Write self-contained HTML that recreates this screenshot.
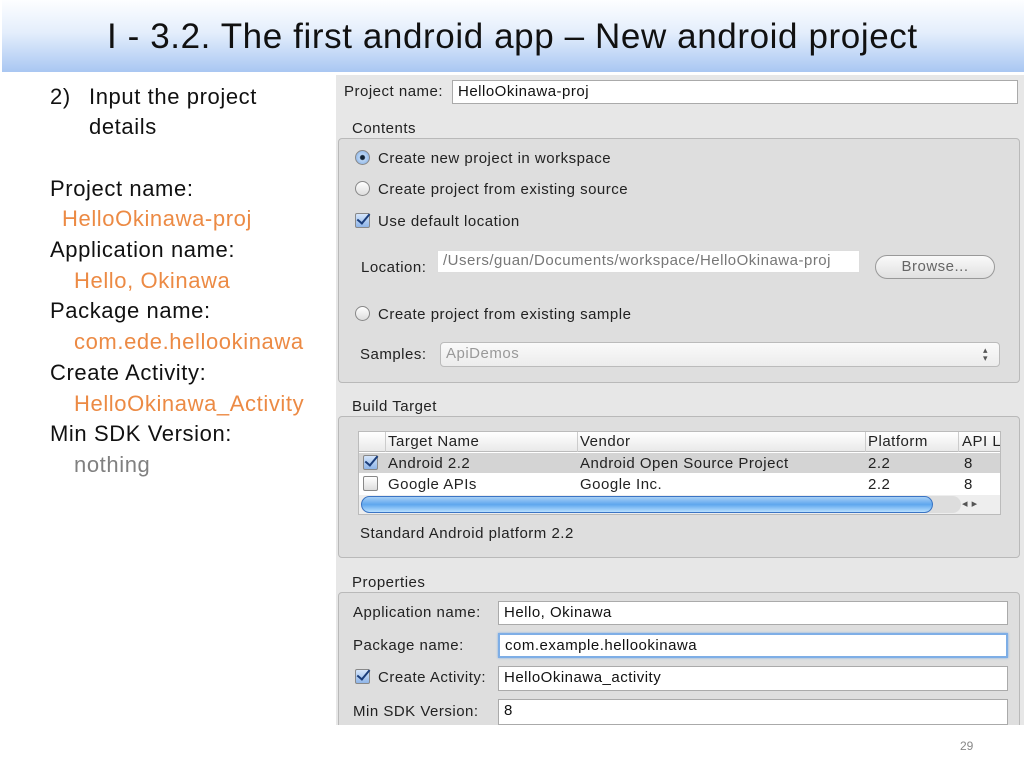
<!DOCTYPE html>
<html><head><meta charset="utf-8"><style>
*{margin:0;padding:0;box-sizing:border-box}
body{width:1024px;height:768px;background:#fff;position:relative;overflow:hidden;font-family:"Liberation Sans",sans-serif}
.a{position:absolute;white-space:nowrap}
#title{left:2px;top:0;width:1022px;height:72px;background:linear-gradient(#fdfeff 0%,#e4eefc 45%,#a9c7f2 100%)}
#title div{position:absolute;left:105px;top:17px;font-size:35px;color:#111;letter-spacing:0.6px}
.lt{font-size:22px;color:#111;line-height:22px;letter-spacing:0.6px}
.or{color:#ec8a44}
#shot{left:336px;top:75px;width:688px;height:650px;background:#e7e7e7}
.u{font-size:15px;color:#222;letter-spacing:0.5px}
.box{position:absolute;border:1px solid #b9b9b9;border-radius:4px;background:#dedede}
.inp{position:absolute;background:#fff;border:1px solid #aaa;font-size:15px;letter-spacing:0.5px;padding:2px 5px;color:#111;overflow:hidden;white-space:nowrap}
.rad{position:absolute;width:15px;height:15px;border-radius:50%;border:1px solid #888;background:linear-gradient(#fff,#ddd)}
.chk{position:absolute;width:15px;height:15px;border-radius:2px;border:1px solid #888;background:linear-gradient(#fff,#ddd)}
.chk.on::after{content:"";position:absolute;left:4px;top:-3px;width:5px;height:11px;border-right:2.5px solid #1a3d7a;border-bottom:2.5px solid #1a3d7a;transform:rotate(40deg)}
.chk.on{background:linear-gradient(#d6e6fb,#8fb5e8)}
</style></head><body>
<div id="title" class="a"><div>I - 3.2. The first android app – New android project</div></div>

<div class="a lt" style="left:50px;top:86px">2)</div>
<div class="a lt" style="left:89px;top:86px">Input the project</div>
<div class="a lt" style="left:89px;top:116px">details</div>
<div class="a lt" style="left:50px;top:178px">Project name:</div>
<div class="a lt or" style="left:62px;top:208px">HelloOkinawa-proj</div>
<div class="a lt" style="left:50px;top:239px">Application name:</div>
<div class="a lt or" style="left:74px;top:270px">Hello, Okinawa</div>
<div class="a lt" style="left:50px;top:300px">Package name:</div>
<div class="a lt or" style="left:74px;top:331px">com.ede.hellookinawa</div>
<div class="a lt" style="left:50px;top:362px">Create Activity:</div>
<div class="a lt or" style="left:74px;top:393px">HelloOkinawa_Activity</div>
<div class="a lt" style="left:50px;top:423px">Min SDK Version:</div>
<div class="a lt" style="left:74px;top:454px;color:#808080">nothing</div>

<div id="shot" class="a"></div>
<div class="a u" style="left:344px;top:83px">Project name:</div>
<div class="inp" style="left:452px;top:80px;width:566px;height:24px">HelloOkinawa-proj</div>
<div class="a u" style="left:352px;top:120px">Contents</div>
<div class="box" style="left:338px;top:138px;width:682px;height:245px"></div>
<div class="rad" style="left:355px;top:150px;background:radial-gradient(#123 0 2px,#bcd6f5 3px,#7aa8e0)"></div>
<div class="a u" style="left:378px;top:150px">Create new project in workspace</div>
<div class="rad" style="left:355px;top:181px"></div>
<div class="a u" style="left:378px;top:181px">Create project from existing source</div>
<div class="chk on" style="left:355px;top:213px"></div>
<div class="a u" style="left:378px;top:213px">Use default location</div>
<div class="a u" style="left:361px;top:259px">Location:</div>
<div class="inp" style="left:437px;top:250px;width:423px;height:23px;border-color:#ddd;color:#777;padding-top:1px">/Users/guan/Documents/workspace/HelloOkinawa-proj</div>
<div class="a u" style="left:875px;top:255px;width:120px;height:24px;border:1px solid #999;border-radius:12px;background:linear-gradient(#fafafa,#e0e0e0);text-align:center;line-height:22px;color:#666">Browse...</div>
<div class="rad" style="left:355px;top:306px"></div>
<div class="a u" style="left:378px;top:306px">Create project from existing sample</div>
<div class="a u" style="left:360px;top:346px">Samples:</div>
<div class="inp" style="left:440px;top:342px;width:560px;height:25px;border-radius:4px;color:#999;background:linear-gradient(#fafafa,#ececec);border-color:#bbb">ApiDemos</div>
<div class="a u" style="left:983px;top:346px;font-size:9px;color:#555;line-height:8px">▴<br>▾</div>

<div class="a u" style="left:352px;top:398px">Build Target</div>
<div class="box" style="left:338px;top:416px;width:682px;height:142px"></div>
<div class="a" style="left:358px;top:431px;width:643px;height:84px;background:#fff;border:1px solid #bbb"></div>
<div class="a" style="left:359px;top:432px;width:641px;height:20px;background:linear-gradient(#fff,#e9e9e9);border-bottom:1px solid #bbb"></div>
<div class="a" style="left:385px;top:432px;width:1px;height:20px;background:#ccc"></div>
<div class="a" style="left:577px;top:432px;width:1px;height:20px;background:#ccc"></div>
<div class="a" style="left:865px;top:432px;width:1px;height:20px;background:#ccc"></div>
<div class="a" style="left:958px;top:432px;width:1px;height:20px;background:#ccc"></div>
<div class="a u" style="left:388px;top:433px">Target Name</div>
<div class="a u" style="left:580px;top:433px">Vendor</div>
<div class="a u" style="left:868px;top:433px">Platform</div>
<div class="a u" style="left:962px;top:433px;width:38px;overflow:hidden">API Level</div>
<div class="a" style="left:359px;top:453px;width:641px;height:20px;background:#d4d4d4"></div>
<div class="chk on" style="left:363px;top:455px"></div>
<div class="a u" style="left:388px;top:455px">Android 2.2</div>
<div class="a u" style="left:580px;top:455px">Android Open Source Project</div>
<div class="a u" style="left:868px;top:455px">2.2</div>
<div class="a u" style="left:964px;top:455px">8</div>
<div class="chk" style="left:363px;top:476px"></div>
<div class="a u" style="left:388px;top:476px">Google APIs</div>
<div class="a u" style="left:580px;top:476px">Google Inc.</div>
<div class="a u" style="left:868px;top:476px">2.2</div>
<div class="a u" style="left:964px;top:476px">8</div>
<div class="a" style="left:359px;top:495px;width:641px;height:19px;background:#eee"></div>
<div class="a" style="left:361px;top:496px;width:600px;height:17px;border-radius:9px;background:#ddd"></div>
<div class="a" style="left:361px;top:496px;width:572px;height:17px;border-radius:9px;border:1px solid #3a74c4;background:linear-gradient(#a8d0f6,#5ea6ee 50%,#b8e0ff)"></div>
<div class="a u" style="left:962px;top:497px;font-size:11px;color:#555">◂ ▸</div>
<div class="a u" style="left:360px;top:525px">Standard Android platform 2.2</div>

<div class="a u" style="left:352px;top:574px">Properties</div>
<div class="box" style="left:338px;top:592px;width:682px;height:140px"></div>
<div class="a u" style="left:353px;top:604px">Application name:</div>
<div class="inp" style="left:498px;top:601px;width:510px;height:24px">Hello, Okinawa</div>
<div class="a u" style="left:353px;top:637px">Package name:</div>
<div class="inp" style="left:498px;top:633px;width:510px;height:25px;border:2px solid #7eaee6;box-shadow:0 0 2px #7eaee6">com.example.hellookinawa</div>
<div class="chk on" style="left:355px;top:669px"></div>
<div class="a u" style="left:378px;top:669px">Create Activity:</div>
<div class="inp" style="left:498px;top:666px;width:510px;height:25px">HelloOkinawa_activity</div>
<div class="a u" style="left:353px;top:703px">Min SDK Version:</div>
<div class="inp" style="left:498px;top:699px;width:510px;height:26px">8</div>
<div class="a" style="left:334px;top:725px;width:690px;height:43px;background:#fff"></div>

<div class="a" style="left:960px;top:739px;font-size:12px;color:#888">29</div>
</body></html>
